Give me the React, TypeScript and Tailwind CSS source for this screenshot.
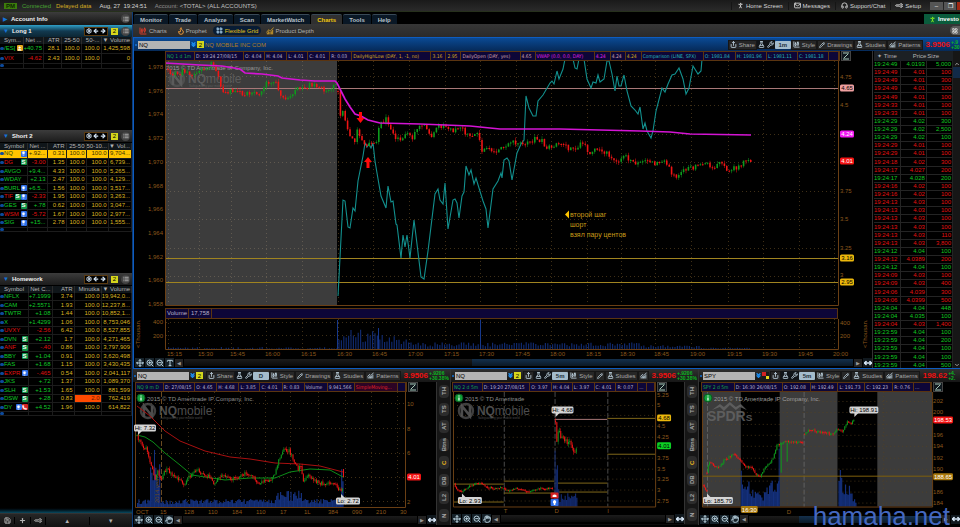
import type { ReactNode } from "react";
import clsx from "clsx";
import {
  Settings,
  ArrowLeft,
  ArrowRight,
  List,
  Wrench,
  Pencil,
  ZoomIn,
  ZoomOut,
  Mail,
  Headphones,
  Lightbulb,
  Phone,
  Hand,
  Type,
  Plus,
  Move,
  MoveHorizontal,
  ChevronsDown,
  ChevronUp,
  ChevronDown,
  LayoutGrid,
  Share,
  FlaskConical,
  ChartCandlestick,
  ChartNoAxesCombined,
  Flame,
  PersonStanding,
  Save,
  User,
} from "lucide-react";

type Point = [number, number];

interface Quote {
  symbol: string;
  badges?: string;
  cells: string[];
  down?: boolean;
  selected?: boolean;
  alert?: boolean;
}

// ── Watchlists ──
const longList: Quote[] = [
  { symbol: "/ES[", badges: "u", cells: ["+40.75", "28.1", "100.0", "100.0", "1,425,598"] },
  { symbol: "VIX", cells: ["-4.62", "2.43", "100.0", "100.0", "0"], down: true },
];

const shortList: Quote[] = [
  { symbol: "NQ", badges: "b", cells: ["+.92...", "0.31", "100.0", "100.0", "9,704..."], selected: true },
  { symbol: "DG", badges: "s", cells: ["-3.00", "1.35", "100.0", "100.0", "6,739..."], down: true },
  { symbol: "AVGO", cells: ["+9.4...", "4.33", "100.0", "100.0", "5,265..."] },
  { symbol: "WDAY", cells: ["+2.13", "2.47", "100.0", "100.0", "4,129..."] },
  { symbol: "BURL", badges: "b", cells: ["+6.5...", "1.56", "100.0", "100.0", "3,517..."] },
  { symbol: "TIF", badges: "sb", cells: ["-2.33", "1.95", "100.0", "100.0", "3,263..."], down: true },
  { symbol: "GES", badges: "s", cells: ["+.78", "0.62", "100.0", "100.0", "3,047..."] },
  { symbol: "WSM", badges: "b", cells: ["-5.72", "1.67", "100.0", "100.0", "2,977..."], down: true },
  { symbol: "SIG", badges: "b", cells: ["+15...", "2.78", "100.0", "100.0", "1,555..."] },
];

const homeworkList: Quote[] = [
  { symbol: "NFLX", cells: ["+7.1999", "3.74", "100.0", "19,942,0..."] },
  { symbol: "CAM", cells: ["+2.5571", "1.93", "100.0", "12,237,8..."] },
  { symbol: "TWTR", cells: ["+1.08", "1.44", "100.0", "10,852,1..."] },
  { symbol: "X", cells: ["+1.4299", "1.06", "100.0", "8,753,046"] },
  { symbol: "UVXY", cells: ["-2.56", "6.42", "100.0", "8,527,855"], down: true },
  { symbol: "DVN", badges: "s", cells: ["+2.12", "1.7", "100.0", "4,271,465"] },
  { symbol: "ANF", badges: "s", cells: ["-.40", "0.86", "100.0", "3,797,909"], down: true },
  { symbol: "BBY", badges: "s", cells: ["+1.04", "0.91", "100.0", "3,620,498"] },
  { symbol: "FAS", cells: ["+1.68", "1.15", "100.0", "3,430,435"] },
  { symbol: "EXPR", badges: "b", cells: ["-.465", "0.54", "100.0", "2,041,117"], down: true },
  { symbol: "JKS", cells: ["+.72", "1.37", "100.0", "1,089,370"] },
  { symbol: "SLH", badges: "s", cells: ["+1.53", "1.65", "100.0", "881,599"] },
  { symbol: "DSW", badges: "s", cells: ["+.28", "0.83", "2.0", "762,419"], alert: true },
  { symbol: "DY", badges: "bp", cells: ["+4.52", "1.96", "100.0", "614,822"] },
];

// ── Time & sales: time, price, size, up/down ──
const trades = `24:49 4.0193 5,000 u|24:49 4.01 100 d|24:49 4.01 300 d|24:49 4.01 100 d|24:49 4.01 100 d
24:33 4.01 100 d|24:33 4.01 100 d|24:29 4.02 300 u|24:29 4.02 2,500 u|24:29 4.02 100 u
24:29 4.01 100 d|24:29 4.01 100 d|24:18 4.02 300 d|24:17 4.027 200 d|24:17 4.028 200 u
24:16 4.02 100 d|24:16 4.02 100 d|24:13 4.03 100 d|24:13 4.03 100 d|24:13 4.03 100 d
24:13 4.03 100 d|24:13 4.03 110 d|24:13 4.03 3,800 d|24:12 4.04 100 u|24:12 4.0389 200 d
24:12 4.04 100 u|24:09 4.03 100 d|24:09 4.03 400 d|24:06 4.039 300 d|24:06 4.0399 500 d
24:04 4.04 448 u|24:04 4.035 100 u|24:04 4.03 1,400 d|23:59 4.04 100 u|23:59 4.04 200 u
23:59 4.04 100 u|23:59 4.04 100 u|23:59 4.04 500 u`
  .split(/[|\n]/)
  .map((t) => t.split(" "));

// ── Chart data ──
const preMarket: Point[] = [[168, 68], [172, 74], [178, 73], [183, 70], [190, 72], [197, 71], [205, 70], [212, 63], [216, 70], [222, 88], [228, 92], [235, 88], [242, 94], [250, 92], [260, 92], [266, 83], [272, 82], [276, 80], [281, 98], [287, 96], [293, 92], [298, 85], [305, 88], [310, 83], [320, 87], [330, 91], [335, 84], [337, 86]];
const session: Point[] = [[338, 90], [341, 122], [343, 107], [346, 125], [350, 135], [354, 143], [357, 130], [361, 137], [366, 144], [372, 140], [377, 142], [379, 125], [386, 118], [391, 127], [395, 140], [402, 137], [408, 130], [413, 137], [420, 123], [426, 126], [431, 138], [437, 127], [447, 124], [453, 132], [457, 125], [463, 128], [468, 135], [479, 134], [481, 150], [487, 145], [493, 151], [500, 148], [510, 141], [520, 143], [531, 140], [537, 137], [542, 140], [546, 148], [555, 143], [562, 142], [568, 148], [576, 146], [585, 142], [589, 153], [598, 146], [604, 150], [613, 158], [620, 159], [627, 156], [635, 163], [640, 161], [648, 160], [655, 162], [662, 160], [668, 165], [673, 176], [680, 174], [685, 168], [695, 166], [705, 160], [710, 167], [720, 163], [728, 168], [738, 167], [745, 158], [748, 157], [751, 160]];
const vwap = "165,62 200,64 222,65 240,68 245,72 262,73 278,75 282,77 300,79 315,80 335,80 337,82 341,90 345,98 350,106 355,113 361,115 368,119 380,122 420,123 470,125 480,126 500,128 560,128 640,130 670,131 690,133 751,134";
const spx = "338,295 343,199 345,200 348,226 350,227 353,207 355,210 358,180 363,155 365,142 367,146 369,143 371,147 373,142 375,160 377,172 381,195 386,207 388,185 391,201 393,200 396,223 397,224 401,257 403,234 405,246 407,234 410,257 414,219 417,243 421,276 424,278 428,250 435,193 438,188 440,199 443,203 445,182 448,228 453,199 455,198 457,202 459,217 462,195 464,191 466,165 469,174 471,169 474,183 476,177 479,187 483,200 486,208 488,227 493,188 498,180 501,172 502,177 504,159 507,157 509,160 512,179 517,152 521,143 524,139 526,95 529,107 533,115 536,115 538,100 543,94 550,82 552,80 554,83 557,70 559,78 563,68 565,58 573,58 575,67 577,68 579,58 584,58 587,78 591,87 593,81 596,82 598,74 600,81 604,78 607,60 609,60 612,73 615,90 617,75 619,85 621,85 624,74 627,90 631,105 635,109 638,113 640,106 643,128 645,122 647,130 651,137 653,130 656,110 662,87 665,91 668,83 672,74 675,73 679,67 683,78 686,93 689,87 693,65 698,73 701,70 702,58";
const daily: Point[] = [[137, 435], [140, 441], [143, 446], [147, 448], [150, 460], [153, 470], [155, 478], [158, 470], [161, 480], [164, 472], [167, 468], [172, 475], [178, 478], [184, 483], [188, 478], [192, 472], [196, 468], [202, 473], [208, 474], [214, 482], [219, 477], [225, 474], [232, 478], [238, 475], [244, 473], [252, 473], [258, 482], [265, 479], [270, 480], [274, 475], [277, 465], [280, 456], [284, 448], [289, 450], [293, 458], [298, 468], [301, 464], [303, 480], [307, 474], [312, 477], [319, 482], [327, 482], [335, 481], [339, 490], [343, 487]];
const twoDayFlat: Point[] = [[453, 483], [455, 488], [461, 491], [465, 488], [470, 485], [479, 482], [487, 487], [495, 488], [503, 487], [506, 490], [515, 488], [530, 491], [540, 488], [553, 488]];
const twoDayDrop: Point[] = [[555, 420], [556, 440], [558, 432], [561, 436], [565, 440], [570, 441], [573, 450], [577, 447]];
const spyParts: Point[][] = [
  [[702, 484], [704, 488], [706, 492]],
  [[706, 472], [708, 460], [712, 465], [718, 466], [725, 458], [733, 453], [740, 460], [745, 466], [750, 466], [755, 474], [759, 476], [765, 467], [772, 458], [776, 445], [780, 442], [790, 441], [803, 442]],
  [[804, 433], [810, 428], [817, 431], [825, 431], [831, 434], [837, 428], [842, 430], [847, 421], [850, 423], [854, 418]],
];

const mainTimes = ["15:15", "15:30", "15:45", "16:00", "16:15", "16:30", "16:45", "17:00", "17:15", "17:30", "17:45", "18:00", "18:15", "18:30", "18:45", "19:00", "19:15", "19:30", "19:45", "20:00"];
const mainXs = [168, 199, 231, 266, 302, 338, 373, 409, 445, 480, 516, 551, 587, 621, 655, 691, 728, 763, 799, 834];

const noise = (n: number) => {
  const v = Math.sin(n * 127.1 + 11.7) * 43758.5453;
  return v - Math.floor(v);
};

const valueAt = (points: Point[], x: number) => {
  const i = points.findIndex((p) => p[0] >= x);
  if (i <= 0) return points[i === 0 ? 0 : points.length - 1][1];
  const [x0, y0] = points[i - 1];
  const [x1, y1] = points[i];
  return y0 + ((y1 - y0) * (x - x0)) / (x1 - x0);
};

function Candles({ points, step = 2.4, swing = 4, width = 1.6 }: { points: Point[]; step?: number; swing?: number; width?: number }) {
  let up = "";
  let down = "";
  let prev = points[0][1];
  const last = points[points.length - 1][0];
  for (let x = points[0][0]; x <= last; x += step) {
    const close = valueAt(points, x) + (noise(x) - 0.5) * swing;
    const top = Math.min(prev, close);
    const bottom = Math.max(prev, close, top + 1);
    const high = top - noise(x + 3) * swing * 0.6;
    const low = bottom + noise(x + 7) * swing * 0.6;
    const d = `M${x - width / 2} ${top}h${width}V${bottom}h${-width}zM${x - 0.25} ${high}h.5V${low}h-.5z`;
    if (close < prev - swing * 0.08) up += d;
    else down += d;
    prev = close;
  }
  return (
    <g>
      <path d={up} fill="#0d9a1c" />
      <path d={down} fill="#f01414" />
    </g>
  );
}

function Bars({ from, to, base, step = 2.4, height, color = "#10296c" }: { from: number; to: number; base: number; step?: number; height: (x: number) => number; color?: string }) {
  let d = "";
  for (let x = from; x <= to; x += step) {
    const h = height(x) * (0.45 + noise(x) * 0.9);
    d += `M${x} ${base}v${-h}h1.2v${h}z`;
  }
  return <path d={d} fill={color} />;
}

function Grid({ xs, ys, left, right, top, bottom }: { xs: number[]; ys: number[]; left: number; right: number; top: number; bottom: number }) {
  return (
    <g stroke="#5a4420" strokeWidth="1" strokeDasharray="1 3" opacity="0.7">
      {xs.map((x) => <path key={x} d={`M${x + 0.5} ${top}V${bottom}`} />)}
      {ys.map((y) => <path key={y} d={`M${left} ${y + 0.5}H${right}`} />)}
    </g>
  );
}

function Tag({ x, y, text, fill, color = "#000", w = 14 }: { x: number; y: number; text: string; fill: string; color?: string; w?: number }) {
  return (
    <g>
      <rect x={x} y={y - 3.5} width={w} height="7" rx="1.5" fill={fill} />
      <text x={x + w / 2} y={y + 2} textAnchor="middle" fill={color}>{text}</text>
    </g>
  );
}

function NqLogo({ x, y }: { x: number; y: number }) {
  return (
    <g fill="#666" opacity="0.75">
      <circle cx={x} cy={y} r="7" fill="none" stroke="#555" strokeWidth="2.5" />
      <path d={`M${x - 4} ${y + 6}V${y - 5}L${x + 4} ${y + 5}V${y - 5}`} stroke="#666" strokeWidth="2.5" fill="none" />
      <text x={x + 11} y={y + 4} fontSize="12" fontWeight="bold">
        NQ<tspan fontWeight="normal">mobile</tspan>
      </text>
      <text x={x + 12} y={y + 8} fontSize="3">Safeguarding your mobile world</text>
    </g>
  );
}

function InfoDot({ x, y }: { x: number; y: number }) {
  return (
    <g>
      <circle cx={x} cy={y} r="4" fill="#12a03a" stroke="#0a5a20" />
      <path d={`M${x} ${y - 2.5}v1M${x} ${y - 0.5}v3`} stroke="#fff" strokeWidth="1.2" />
    </g>
  );
}

function Badge({ kind }: { kind: string }) {
  if (kind === "s")
    return <span className="flex size-[6px] items-center justify-center rounded-[1px] bg-[#12964a] font-bold text-white">S</span>;
  return (
    <span className={clsx("flex size-[6px] items-center justify-center rounded-[1px]", kind === "b" && "bg-[#2f6fe8]", kind === "p" && "bg-[#d42222]", kind === "u" && "bg-[#e8a81c]")}>
      {kind === "b" && <Lightbulb className="size-[5px] fill-white text-white" />}
      {kind === "p" && <Phone className="size-[5px] fill-white text-white" />}
      {kind === "u" && <User className="size-[5px] fill-white text-white" />}
    </span>
  );
}

function Dot() {
  return <span className="block h-[3px] w-[4px] rounded-full bg-[#0d4a9c]" />;
}

function WatchHeader({ title, active }: { title: string; active?: boolean }) {
  return (
    <div className={clsx("flex h-[12px] items-center gap-[3px] bg-linear-to-b pl-[3px] pr-[2px]", active ? "from-[#2fa0c8] via-[#123a50] to-[#0c2634]" : "from-[#3c3c3c] to-[#1c1c1c]")}>
      <span className="text-[#1673d8]">▼</span>
      <h2 className="flex-1 font-bold text-[#f0f0f0]">{title}</h2>
      <div className="flex h-[9px] items-center gap-[1px] border border-[#5a3a10] bg-black px-[1px] text-[#d4e4f4]">
        <button aria-label="Settings"><Settings className="size-[6px]" strokeWidth={4} /></button>
        <button aria-label="Previous"><ArrowLeft className="size-[6px]" strokeWidth={5} /></button>
        <button aria-label="Next"><ArrowRight className="size-[6px]" strokeWidth={5} /></button>
      </div>
      <span className="flex size-[7px] items-center justify-center bg-[#d6d61c] text-black">2</span>
      <button aria-label="Menu" className="flex size-[9px] items-center justify-center rounded-full bg-[#444] text-[#ccc]">
        <List className="size-[6px]" strokeWidth={3} />
      </button>
    </div>
  );
}

function WatchTable({ columns, rows, colClasses, className }: { columns: string[]; rows: Quote[]; colClasses: string[]; className: string }) {
  return (
    <table className={clsx("w-full table-fixed border-collapse leading-[7px]", className)}>
      <colgroup>
        <col className="w-[4px]" />
        {colClasses.map((c, i) => <col key={i} className={c} />)}
      </colgroup>
      <thead>
        <tr className="bg-[#10161a] text-[#b4b4b4]">
          <th className="p-0" />
          {columns.map((c, i) => (
            <th key={i} className={clsx("overflow-hidden border-r border-[#2a2a2a] p-0 pr-[1px] font-normal whitespace-nowrap", i === 0 ? "text-left" : "text-right")}>
              {c}
            </th>
          ))}
        </tr>
      </thead>
      <tbody>
        {rows.map((r) => (
          <tr key={r.symbol} className={clsx("border-b border-[#1c1c1c]", r.selected && "bg-[#ffc400]")}>
            <td className="p-0"><Dot /></td>
            <td className={clsx("border-r border-[#1c1c1c] p-0", r.selected ? "text-[#2a4a00]" : r.down ? "text-[#e01010]" : "text-[#10c828]")}>
              <div className="flex h-[7px] items-center justify-between">
                <span>{r.symbol}</span>
                <span className="flex shrink-0">{r.badges?.split("").map((b) => <Badge key={b} kind={b} />)}</span>
              </div>
            </td>
            {r.cells.map((c, i) => (
              <td
                key={i}
                className={clsx(
                  "overflow-hidden border-r border-[#1c1c1c] p-0 pr-[1px] text-right whitespace-nowrap",
                  r.selected ? "text-[#3a3000]" : r.alert && i === 2 ? "bg-[#ff4a00] text-[#6a1800]" : i > 0 ? "text-[#dcb420]" : r.down ? "text-[#e01010]" : "text-[#10c828]",
                )}
              >
                {c}
              </td>
            ))}
          </tr>
        ))}
        <tr className="border-b border-[#1c1c1c]">
          <td className="p-0"><Dot /></td>
          {columns.map((_, i) => <td key={i} className="border-r border-[#1c1c1c] p-0" />)}
        </tr>
      </tbody>
    </table>
  );
}

function ToolButton({ icon, label, name }: { icon: ReactNode; label: string; name?: string }) {
  return (
    <button aria-label={name} className="flex h-[10px] shrink-0 items-center gap-[2px] border border-[#161616] bg-[#262626] px-[1px] text-[#a8a8a8]">
      <span className="text-[#b8ccd8]">{icon}</span>
      {label}
    </button>
  );
}

interface ToolbarProps {
  symbol: string;
  company?: string;
  interval: string;
  price: string;
  change: [string, string];
  changeWidth?: string;
  compact?: boolean;
  patternsLabel?: boolean;
  linkColor?: boolean;
}

function ChartToolbar({ symbol, company, interval, price, change, changeWidth = "w-[22px]", compact, patternsLabel = true, linkColor }: ToolbarProps) {
  return (
    <div className={clsx("flex h-[13px] items-center overflow-hidden whitespace-nowrap", company ? "bg-linear-to-b from-[#0a4a94] to-[#062a58]" : "bg-linear-to-b from-[#303030] to-[#161616]")}>
      <span className="mx-[1px] block size-[2px] shrink-0 rounded-full bg-[#1673d8]" />
      <input aria-label="Symbol" defaultValue={symbol} className="h-[8px] w-[52px] shrink-0 bg-[#b4b4b4] px-[1px] text-black" />
      <button aria-label="Symbol list" className="shrink-0 text-[#1c8cf0]"><ChevronsDown className="size-[7px]" strokeWidth={5} /></button>
      {linkColor ? (
        <span className="grid size-[7px] shrink-0 grid-cols-2">
          <span className="bg-[#d42222]" />
          <span className="bg-[#1a1a1a]" />
          <span className="bg-[#1a1a1a]" />
          <span className="bg-[#e8d81c]" />
        </span>
      ) : (
        <span className="flex size-[7px] shrink-0 items-center justify-center bg-[#d6d61c] text-black">2</span>
      )}
      <span className="flex-1 pl-[1px] text-[#b07c24]">{company}</span>
      <ToolButton icon={<Share className="size-[7px]" strokeWidth={3} />} label={compact ? "" : "Share"} name="Share" />
      <button aria-label="Studies shortcut" className="flex size-[9px] shrink-0 items-center justify-center bg-[#101418] text-[#b8ccd8]"><FlaskConical className="size-[7px]" strokeWidth={3} /></button>
      <button aria-label="Chart settings" className="flex size-[9px] shrink-0 items-center justify-center bg-[#101418] text-[#b8ccd8]"><Wrench className="size-[7px]" strokeWidth={3} /></button>
      <button className="flex h-[8px] w-[16px] shrink-0 items-center justify-center rounded-[1px] bg-[#a4bccc] font-bold text-[#22303a]">{interval}</button>
      <ToolButton icon={<ChartCandlestick className="size-[7px]" strokeWidth={3} />} label="Style" />
      <ToolButton icon={<Pencil className="size-[6px]" strokeWidth={3} />} label={compact ? "" : "Drawings"} name="Drawings" />
      <ToolButton icon={<FlaskConical className="size-[7px]" strokeWidth={3} />} label="Studies" />
      <ToolButton icon={<ChartNoAxesCombined className="size-[7px]" strokeWidth={3} />} label={patternsLabel ? "Patterns" : ""} name="Patterns" />
      <span className="pl-[3px] text-[8px] font-bold text-[#f01010]">{price}</span>
      <span className={clsx("shrink-0 overflow-hidden pl-[1px] text-[5px] leading-[5px] font-bold text-[#0cb820]", changeWidth)}>
        {change[0]}
        <br />
        {change[1]}
      </span>
    </div>
  );
}

function Strip({ cells, className }: { cells: [string, string][]; className: string }) {
  return (
    <div className={clsx("grid h-[10px] items-stretch border border-[#5a3410] bg-[#0d0638] font-['DejaVu_Sans_Condensed','Liberation_Sans',sans-serif] text-[5px]", className)}>
      {cells.map(([text, color], i) => (
        <span key={i} className={clsx("border-r border-[#5a3410] pl-[1px] whitespace-nowrap", color)}>{text}</span>
      ))}
    </div>
  );
}

function ScrollBar({ thumb, hand }: { thumb?: string; hand?: boolean }) {
  const icons = [<Move key="m" />, <ZoomIn key="i" />, <ZoomOut key="o" />, hand ? <Hand key="h" /> : <Type key="t" />];
  const labels = ["Pan", "Zoom in", "Zoom out", hand ? "Grab" : "Text"];
  return (
    <div className="flex h-[11px] items-center gap-[1px] bg-black pl-[1px]">
      {icons.map((icon, i) => (
        <button key={i} aria-label={labels[i]} className="flex size-[9px] items-center justify-center bg-[#16222a] text-[#b8d0dc] [&>svg]:size-[8px] [&>svg]:stroke-3">{icon}</button>
      ))}
      <button aria-label="Scroll left" className="flex size-[8px] items-center justify-center bg-[#222] text-[5px] text-[#999]">◀</button>
      <div className="flex h-[7px] flex-1 bg-linear-to-b from-[#1c1c1c] to-[#0a0a0a]">
        {thumb && <span className={clsx("ml-auto block h-full bg-linear-to-b from-[#14304c] to-[#0a1826]", thumb)} />}
      </div>
      <button aria-label="Scroll right" className="flex size-[8px] items-center justify-center bg-[#222] text-[5px] text-[#999]">▶</button>
      <button aria-label="Fit width" className="flex size-[9px] items-center justify-center bg-[#10181e] text-[#d4e4f4]"><MoveHorizontal className="size-[8px]" strokeWidth={5} /></button>
    </div>
  );
}

function SideTabs() {
  const tabs = ["TH", "TS", "AT", "Btns", "C", "DB", "L2", "N"];
  return (
    <nav className="flex w-[14px] shrink-0 flex-col items-center justify-around border-l border-[#333] bg-[#161616] py-[1px]">
      {tabs.map((t) => (
        <button key={t} className={clsx("flex min-h-[13px] w-[10px] rotate-180 items-center justify-center rounded-[4px] bg-[#2c2c2c] px-0 py-[1px] font-bold [writing-mode:vertical-rl]", t === "C" ? "text-[#e8b81c]" : "text-[#a8a8a8]")}>
          {t}
        </button>
      ))}
    </nav>
  );
}

function MainChart() {
  const ys = [75, 104, 133, 161, 190, 218, 247, 275];
  return (
    <svg viewBox="134 60 738 247" className="block w-full text-[6px]" role="img" aria-label="NQ one minute chart">
      <rect x="166" y="60" width="171" height="244" fill="#3c3c3c" />
      <Grid xs={mainXs} ys={ys} left={166} right={838} top={60} bottom={304} />
      <g stroke="#6a6a6a" strokeDasharray="1 3" opacity="0.6">
        {mainXs.slice(0, 5).map((x) => <path key={x} d={`M${x + 0.5} 60V304`} />)}
        {ys.map((y) => <path key={y} d={`M166 ${y + 0.5}H337`} />)}
      </g>
      <text x="166" y="69" fill="#999">2015 © TD Ameritrade IP Company, Inc.</text>
      <NqLogo x={177} y={78} />
      <path d="M166 87.5H838" stroke="#a87878" />
      <path d="M166 257.5H838M166 281.5H838" stroke="#a08420" />
      <Candles points={preMarket} swing={5} />
      <polyline points={spx} fill="none" stroke="#12908e" strokeWidth="1.1" />
      <Candles points={session} swing={5} />
      <polyline points={vwap} fill="none" stroke="#d414d4" strokeWidth="1.7" />
      <path d="M359 111h3v6h2.5l-4 5-4-5h2.5z" fill="#ff0a0a" />
      <path d="M366.500 167h3v-6h2.5l-4-5-4 5h2.5z" fill="#ff0a0a" />
      <path d="M165.500 60V304.500H838.500V60" fill="none" stroke="#6a3f14" />
      <path d="M565 213.500l4-4v8z" fill="#ffc400" />
      <g fill="#c89c18" fontSize="7">
        <text x="570" y="216">второй шаг</text>
        <text x="570" y="226">шорт</text>
        <text x="570" y="236">взял пару центов</text>
      </g>
      <g fill="#8c581c" textAnchor="end">
        {["1,978", "1,976", "1,974", "1,972", "1,970", "1,968", "1,966", "1,964", "1,962", "1,960", "1,958"].map((t, i) => (
          <text key={t} x="163" y={68 + i * 23.7}>{t}</text>
        ))}
      </g>
      <g fill="#8c581c">
        <text x="840" y="78">4.75</text>
        <text x="840" y="106">4.5</text>
        <text x="840" y="192">3.75</text>
        <text x="840" y="220">3.5</text>
        <text x="840" y="249">3.25</text>
        <text x="840" y="276">3</text>
      </g>
      <Tag x={840} y={87} text="4.65" fill="#f0a0a0" />
      <Tag x={840} y={133} text="4.24" fill="#f418f4" color="#fff" />
      <Tag x={840} y={160} text="4.01" fill="#f41414" color="#fff" />
      <Tag x={840} y={257} text="3.16" fill="#ecb80c" />
      <Tag x={840} y={281} text="2.95" fill="#ecb80c" />
    </svg>
  );
}

function VolumeChart() {
  const height = (x: number) => (x < 337 ? noise(x * 3) * 2 : x < 410 ? 17 - (x - 338) / 9 : x < 640 ? 5 : x < 700 ? 3 : 1);
  return (
    <svg viewBox="134 318 738 38" className="block w-full text-[6px]" role="img" aria-label="Volume">
      <Grid xs={mainXs} ys={[321, 334]} left={166} right={838} top={318} bottom={348} />
      <Bars from={168} to={750} base={348} height={height} />
      <path d="M337.500 348V319M378.500 348V327M480.500 348V319" stroke="#16388c" />
      <path d="M165.500 318V348.500H838.500V318" fill="none" stroke="#6a3f14" />
      <g fill="#8c581c">
        <text x="163" y="323" textAnchor="end">400</text>
        <text x="163" y="337" textAnchor="end">200</text>
        <text x="840" y="324">400</text>
        <text x="840" y="337">200</text>
        <text x="140" y="347" transform="rotate(-90 140 347)">&lt;Thousan...</text>
        <text x="867" y="347" transform="rotate(-90 867 347)">&lt;Thousan...</text>
        {mainTimes.map((t, i) => <text key={t} x={mainXs[i] - 1} y="355">{t}</text>)}
      </g>
    </svg>
  );
}

function DailyChart() {
  return (
    <svg viewBox="133 391 303 122" className="block w-full text-[6px]" role="img" aria-label="NQ daily chart">
      <Grid xs={[188, 214, 240, 265, 290, 318, 345, 371, 397]} ys={[402, 427, 452, 476, 500]} left={135} right={405} top={391} bottom={506} />
      <path d="M161.500 391V506" stroke="#6a4a20" strokeDasharray="5 2" />
      <NqLogo x={148} y={410} />
      <InfoDot x={141} y={397} />
      <text x="147" y="400" fill="#8c8c8c">2015 © TD Ameritrade IP Company, Inc.</text>
      <Bars from={137} to={343} base={506} step={1.3} color="#14307c" height={(x) => (x > 150 && x < 160 ? 34 : x > 275 && x < 302 ? 13 : x > 340 ? 30 : 6)} />
      <path d="M154.500 506V449" stroke="#14307c" />
      <polyline points="137,405 150,415 165,430 180,440 205,450 230,456 250,458 275,462 300,463 320,465 343,471" fill="none" stroke="#a81010" />
      <polyline points="137,434 145,436 153,441 165,452 180,464 192,474 205,476 225,479 250,477 275,477 290,471 310,468 330,469 343,476" fill="none" stroke="#0c8c18" />
      <Candles points={daily} step={1.3} swing={4} width={1.1} />
      <path d="M343.500 468V476" stroke="#f01414" />
      <path d="M135.500 391V506.500H405.500V391" fill="none" stroke="#6a3f14" />
      <text x="159" y="502" fill="#6a4a20" transform="rotate(-90 159 502)">2014 year</text>
      <Tag x={134} y={427} text="Hi: 7.32" fill="#d4d4d4" w={22} />
      <path d="M138 434l0-4 4 0z" fill="#d4d4d4" />
      <Tag x={336} y={500} text="Lo: 2.72" fill="#d4d4d4" w={24} />
      <path d="M341 493l0 4 4 0z" fill="#d4d4d4" />
      <g fill="#8c581c">
        {["10", "8", "6", "4", "2"].map((t, i) => i !== 3 && <text key={t} x="407" y={405 + i * 24.5}>{t}</text>)}
        {["OCT", "15", "128", "110", "184", "110", "17", "1L", "384", "090", "210", "30"].map((t, i) => (
          <text key={i} x={136 + i * 24} y="513">{t}</text>
        ))}
      </g>
      <Tag x={407} y={476} text="4.01" fill="#f41414" color="#fff" />
    </svg>
  );
}

function TwoDayChart() {
  const labels: [string, number][] = [["5.25", 396], ["5", 406], ["4.5", 427], ["4.25", 438], ["3.75", 459], ["3.5", 470], ["3.25", 480], ["3", 491], ["2.75", 502]];
  return (
    <svg viewBox="450 391 234 122" className="block w-full text-[6px]" role="img" aria-label="NQ five minute chart">
      <Grid xs={[]} ys={[404, 414, 425, 436, 446, 457, 468, 478, 489, 500]} left={452} right={655} top={391} bottom={506} />
      <path d="M503.500 391V506M554.500 391V506M607.500 391V506" stroke="#4a4a4a" strokeDasharray="5 2" />
      <InfoDot x={458} y={397} />
      <text x="464" y="400" fill="#8c8c8c">2015 © TD Ameritrade</text>
      <NqLogo x={465} y={410} />
      <path d="M453 483.500H503M453 501.500H503M503 480.500H554M503 492.500H554M554 482.500H607M554 491.500H607M607 417.500H655M607 453.500H655" stroke="#80681a" />
      <path d="M554 418.500H607" stroke="#a87878" />
      <Bars from={555} to={577} base={506} step={1.3} color="#12296c" height={(x) => (x < 558 ? 34 : 10)} />
      <path d="M554.500 506V450" stroke="#12296c" />
      <Candles points={twoDayFlat} step={1.3} swing={2} width={1.1} />
      <Candles points={twoDayDrop} step={1.3} swing={6} width={1.1} />
      <path d="M452.500 391V506.500H655.500V391" fill="none" stroke="#6a3f14" />
      <rect x="550" y="492" width="8" height="6" rx="1" fill="#d42222" />
      <path d="M552 496.500v-1.500q2-2 4 0v1.500z" fill="#fff" />
      <rect x="550" y="498.500" width="8" height="7" rx="1" fill="#2f6fe8" />
      <path d="M554 499.500a2 2 0 0 1 .8 3.600v1.500h-1.600v-1.500a2 2 0 0 1 .8-3.600z" fill="#fff" />
      <Tag x={551} y={409} text="Hi: 4.68" fill="#d4d4d4" w={22} />
      <path d="M555 416l0-4 4 0z" fill="#d4d4d4" />
      <Tag x={457} y={500} text="Lo: 2.93" fill="#d4d4d4" w={24} />
      <path d="M461 493l0 4 4 0z" fill="#d4d4d4" />
      <g fill="#8c581c">
        {labels.map(([t, y]) => <text key={t} x="657" y={y}>{t}</text>)}
        <text x="503" y="513">T</text>
        <text x="554" y="513">D</text>
        <text x="607" y="513">I</text>
      </g>
      <Tag x={657} y={417} text="4.68" fill="#ecb80c" />
      <Tag x={657} y={445} text="4.01" fill="#0cd024" />
    </svg>
  );
}

function SpyChart() {
  const labels: [string, number][] = [["202", 402], ["200", 413], ["196", 436], ["194", 447], ["192", 459], ["190", 470], ["186", 493], ["184", 504]];
  return (
    <svg viewBox="698 391 262 122" className="block w-full text-[6px]" role="img" aria-label="SPY five minute chart">
      <path d="M702 391h38v115h-38zM779 391h58v115h-58zM877 391h55v115h-55z" fill="#3c3c3c" />
      <Grid xs={[786, 883]} ys={[400, 411, 423, 434, 445, 457, 468, 480, 491, 502]} left={702} right={932} top={391} bottom={506} />
      <path d="M706.500 391V506M803.500 391V506" stroke="#606060" strokeDasharray="5 2" />
      <InfoDot x={707} y={397} />
      <text x="713" y="400" fill="#9c9c9c">2015 © TD Ameritrade IP Company, Inc.</text>
      <g fill="#666" opacity="0.8">
        <path d="M711 409l8-6 4 3 6-5 6 5 5-3 6 6-7-3-4 3-6-5-6 6-4-4z" />
        <text x="706" y="420" fontSize="14" fontWeight="bold">SPDR<tspan fontSize="10">S</tspan></text>
      </g>
      <Bars from={741} to={778} base={506} step={1.3} color="#14307c" height={(x) => 9 + Math.abs(x - 759) * 0.9} />
      <Bars from={838} to={855} base={506} step={1.3} color="#14307c" height={(x) => 30 - (x - 838) * 1.3} />
      <path d="M740.500 506V470M778.500 506V448" stroke="#14307c" />
      <path d="M702 475.500H932" stroke="#80600c" />
      <path d="M780.500 442V472M786.500 442V461" stroke="#0d9a1c" />
      {spyParts.map((points, i) => <Candles key={i} points={points} step={1.3} swing={2.5} width={1.1} />)}
      <path d="M701.500 391V506.500H932.500V391" fill="none" stroke="#6a3f14" />
      <Tag x={849} y={409} text="Hi: 198.91" fill="#d4d4d4" w={29} />
      <path d="M854 416l0-4 4 0z" fill="#d4d4d4" />
      <Tag x={702} y={500} text="Lo: 185.79" fill="#d4d4d4" w={30} />
      <path d="M706 493l0 4 4 0z" fill="#d4d4d4" />
      <g fill="#8c581c">
        {labels.map(([t, y]) => <text key={t} x="933" y={y}>{t}</text>)}
        <text x="786" y="513">D</text>
      </g>
      <Tag x={933} y={419} text="198.53" fill="#f41414" color="#fff" w={20} />
      <Tag x={933} y={476} text="188.65" fill="#a8780c" color="#fff" w={20} />
      <Tag x={740} y={509} text="16:30" fill="#a8780c" color="#fff" w={17} />
    </svg>
  );
}

const gold = "text-[#d4a820]";
const pale = "text-[#b8b2d0]";
const green = "text-[#14a84a]";
const teal = "text-[#24b8b8]";
const rose = "text-[#d0a0ac]";
const violet = "text-[#e020e8]";

function AxisButton() {
  return (
    <button aria-label="Axis settings" className="ml-[1px] flex size-[10px] shrink-0 items-center justify-center border border-[#444] bg-[#10181e] text-[#a8c8b8]">
      <svg viewBox="0 0 8 8" className="size-[8px]" fill="none" stroke="currentColor">
        <path d="M1 7h6M1 1h6M2 6l4-4" />
      </svg>
    </button>
  );
}

export default function App() {
  return (
    <div className="relative flex min-h-screen flex-col overflow-hidden bg-black font-['Liberation_Sans',sans-serif] text-[6px] leading-[8px]">
      {/* Status bar */}
      <header className="flex h-[12px] items-center justify-between border-b border-[#26301c] bg-linear-to-b from-[#1a1a1a] to-[#2a2a2a]">
        <div className="flex items-center gap-[5px] pl-[4px]">
          <span className="bg-[#3c7c0c] px-[2px] leading-[6px] font-bold text-[#0c2400]">PM</span>
          <span className="text-[#46a030]">Connected</span>
          <span className={gold}>Delayed data</span>
          <span className="pl-[3px] text-[#d4d4d4]">Aug, 27&nbsp; 19:24:51</span>
          <span className="pl-[3px] text-[#8c8c8c]">Account: <span className="text-[#c0c0c0]">&lt;TOTAL&gt; (ALL ACCOUNTS)</span></span>
        </div>
        <div className="flex items-center text-[#d4d4d4]">
          {[
            [<PersonStanding key="p" />, "Home Screen"],
            [<Mail key="m" />, "Messages"],
            [<Headphones key="h" />, "Support/Chat"],
            [<Wrench key="w" className="rotate-45" />, "Setup"],
          ].map(([icon, label], i) => (
            <button key={i} className="flex items-center gap-[2px] border-l border-[#151515] px-[5px] [&>svg]:size-[7px] [&>svg]:stroke-3">
              {icon}
              {label}
            </button>
          ))}
          <button aria-label="Minimise" className="ml-[4px] flex h-[8px] w-[13px] items-center justify-center bg-[#555] text-white">–</button>
          <button aria-label="Restore" className="ml-[1px] flex h-[8px] w-[12px] items-center justify-center bg-[#555] text-white">❐</button>
          <button aria-label="Close" className="ml-[1px] h-[8px] w-[3px] bg-[#a02814]" />
        </div>
      </header>

      <div className="flex flex-1">
        {/* Watchlists */}
        <aside className="flex w-[133px] shrink-0 flex-col border-r border-[#0d3c78]">
          <div className="flex h-[13px] items-center justify-between bg-linear-to-b from-[#3c3c3c] to-[#161616] pl-[3px] pr-[2px]">
            <div className="flex items-center gap-[3px]">
              <span className="text-[#1673d8]">▶</span>
              <h2 className="font-bold text-[#f0f0f0]">Account Info</h2>
            </div>
            <button aria-label="Menu" className="flex size-[9px] items-center justify-center rounded-full bg-[#444] text-[#ccc]">
              <List className="size-[6px]" strokeWidth={3} />
            </button>
          </div>
          <section className="min-h-[105px]">
            <WatchHeader title="Long 1" active />
            <WatchTable className="h-[32px]" columns={["Sym...", "Net ...", "ATR", "25-50", "50-...", "▼ Volume"]} rows={longList} colClasses={["w-[19px]", "w-[20px]", "w-[18px]", "w-[20px]", "w-[20px]", ""]} />
          </section>
          <section className="min-h-[143px]">
            <WatchHeader title="Short 2" />
            <WatchTable className="mt-[1px] h-[89px]" columns={["Symbol", "Net ...", "ATR", "25-50", "50-10...", "▼ Vol..."]} rows={shortList} colClasses={["w-[23px]", "w-[20px]", "w-[19px]", "w-[20px]", "w-[22px]", ""]} />
          </section>
          <section className="flex-1">
            <WatchHeader title="Homework" />
            <WatchTable className="mt-[1px] h-[130px]" columns={["Symbol", "Net C...", "ATR", "Minutka", "▼ Volume"]} rows={homeworkList} colClasses={["w-[24px]", "w-[24px]", "w-[22px]", "w-[27px]", ""]} />
          </section>
          <div className="h-[6px] bg-linear-to-b from-black to-[#0a4a60]" />
          <div className="flex h-[14px] items-center border-t border-[#333] bg-linear-to-b from-[#262626] to-[#121212] text-[#b4b4b4]">
            <button aria-label="Save" className="flex w-[14px] justify-center"><Save className="size-[7px]" strokeWidth={3} /></button>
            <button aria-label="Add" className="flex w-[16px] justify-center border-l border-black"><Plus className="size-[7px]" strokeWidth={4} /></button>
            <button aria-label="Configure" className="flex w-[15px] justify-center border-l border-black"><Wrench className="size-[7px] rotate-45" strokeWidth={3} /></button>
            <button className="flex-1 border-l border-black">▲</button>
            <button className="flex-1 border-l border-black">▼</button>
          </div>
        </aside>

        <main className="flex min-w-0 flex-1 flex-col">
          {/* Tabs */}
          <nav className="flex h-[12px] items-end justify-between pl-[1px] font-bold">
            <div className="flex">
              {["Monitor", "Trade", "Analyze", "Scan", "MarketWatch", "Charts", "Tools", "Help"].map((t) => (
                <a
                  key={t}
                  href={`#${t}`}
                  className={clsx("mr-[1px] flex h-[10px] items-center rounded-t-[2px] border-t border-[#3a4a58] px-[6px]", t === "Charts" ? "bg-[#303030] text-[#f0c80c]" : "bg-[#0a1826] text-[#b8c0c8]")}
                >
                  {t}
                </a>
              ))}
            </div>
            <a href="#investools" className="flex h-[10px] w-[36px] items-center gap-[2px] overflow-hidden bg-[#0a5c3c] pl-[5px] whitespace-nowrap text-white">
              <PersonStanding className="size-[7px] shrink-0 text-[#8cf01c]" strokeWidth={3} />
              Investo
            </a>
          </nav>
          <div className="flex h-[13px] items-center bg-linear-to-b from-[#363636] to-[#2a2a2a] pl-[5px] text-[#b0b0b0]">
            <button className="flex items-center gap-[2px] px-[1px]"><ChartCandlestick className="size-[8px] text-[#d43c2c]" strokeWidth={3} />Charts</button>
            <button className="ml-[8px] flex items-center gap-[1px] px-[1px]"><Flame className="size-[8px] text-[#e8983c]" strokeWidth={3} />Prophet</button>
            <button className="ml-[5px] flex h-[9px] items-center gap-[2px] rounded-full bg-[#081c34] px-[3px] text-[#e8c41c]"><LayoutGrid className="size-[7px] fill-[#8cb0cc] text-[#8cb0cc]" />Flexible Grid</button>
            <button className="ml-[5px] flex items-center gap-[1px]"><ChartNoAxesCombined className="size-[8px] text-[#c8982c]" strokeWidth={3} />Product Depth</button>
            <button aria-label="Grid layout" className="ml-auto flex h-[9px] w-[10px] items-center justify-center rounded-l-full bg-[#5a5a5a] text-[#ddd]"><LayoutGrid className="size-[6px]" strokeWidth={3} /></button>
          </div>

          {/* Large chart */}
          <section className="border-y border-l border-[#0d5cc0]">
            <ChartToolbar symbol="NQ" company="NQ MOBILE INC COM" interval="1m" price="3.9506" change={["+.9", "+30"]} changeWidth="w-[10px]" />
            <div className="flex">
              <div className="min-w-0 flex-1">
                <div className="flex pr-[21px] pl-[31px]">
                  <Strip
                    className="flex-1 grid-cols-[29fr_49fr_21fr_22fr_21fr_22fr_22fr_79fr_15fr_15fr_59fr_15fr_59fr_16fr_15fr_16fr_62fr_32fr_31fr_31fr_31fr_10fr]"
                    cells={[
                      ["NQ 1 d 1m", green], ["D: 19:24 27/08/15", pale], ["O: 4.04", pale], ["H: 4.04", pale], ["L: 4.01", pale], ["C: 4.01", pale], ["R: 0.03", pale],
                      ["DailyHighLow (DAY, 1, -1, no)", gold], ["3.16", gold], ["2.95", gold], ["DailyOpen (DAY, yes)", rose], ["4.65", rose],
                      ["VWAP (0.0, 0.0, DAY)", violet], ["4.24", violet], ["4.24", rose], ["4.24", gold],
                      ["Comparison (LINE, SPX)", teal], ["O: 1981.84", teal], ["H: 1981.96", teal], ["L: 1981.11", teal], ["C: 1981.18", teal], ["", teal],
                    ]}
                  />
                  <AxisButton />
                </div>
                <MainChart />
                <div className="mr-[34px] ml-[31px] flex h-[11px] border border-[#5a3410] bg-[#0d0638] text-[#b8b0c8]">
                  <span className="border-r border-[#5a3410] px-[1px]">Volume</span>
                  <span className="border-r border-[#5a3410] px-[2px]">17,758</span>
                </div>
                <VolumeChart />
                <ScrollBar thumb="w-[57%]" />
              </div>

              {/* Time & sales */}
              <aside className="flex w-[88px] shrink-0 border-l border-[#333] pl-[1px]">
                <div className="h-0 min-h-full flex-1 overflow-hidden">
                  <table className="h-[319px] w-full table-fixed border-collapse text-right leading-[7px]">
                    <thead>
                      <tr className="h-[10px] bg-[#1c2024] text-[#b4b4b4]">
                        <th className="p-0 text-center font-normal">✦ Time</th>
                        <th className="p-0 font-normal">Price</th>
                        <th className="p-0 pl-[1px] text-left font-normal">Size</th>
                      </tr>
                    </thead>
                    <tbody>
                      {trades.map(([time, price, size, dir], i) => (
                        <tr key={i} className={clsx("border-b border-[#242424]", dir === "u" ? "text-[#10c820]" : "text-[#e41010]")}>
                          <td className="border-r border-[#242424] p-0 text-left">19:{time}</td>
                          <td className="border-r border-[#242424] p-0 pr-[1px]">{price}</td>
                          <td className="border-r border-[#242424] p-0 pr-[1px]">{size}</td>
                        </tr>
                      ))}
                    </tbody>
                  </table>
                </div>
                <div className="flex w-[7px] flex-col items-center justify-between bg-[#161616] pt-[10px] text-[#999]">
                  <ChevronUp className="size-[6px]" strokeWidth={4} />
                  <span className="mb-auto block h-[11px] w-full bg-[#122a48]" />
                  <ChevronDown className="size-[6px]" strokeWidth={4} />
                </div>
              </aside>
            </div>
          </section>

          {/* Lower charts */}
          <div className="grid grid-cols-[minmax(0,317fr)_minmax(0,248fr)_minmax(0,262fr)] bg-[#0c0c0c]">
            <section>
              <ChartToolbar symbol="NQ" interval="D" price="3.9506" change={["+.9206", "+30.38%"]} />
              <div className="flex bg-black">
                <div className="min-w-0 flex-1">
                  <div className="flex pr-[18px] pl-[2px]">
                    <Strip
                      className="flex-1 grid-cols-[28fr_31fr_22fr_22fr_21fr_22fr_22fr_23fr_27fr_43fr_8fr]"
                      cells={[["NQ 9 m D", green], ["D: 27/08/15", pale], ["O: 4.65", pale], ["H: 4.68", pale], ["L: 3.85", pale], ["C: 4.01", pale], ["R: 0.83", pale], ["Volume", pale], ["9,941,566", pale], ["SimpleMoving...", "bg-[#2c0424] text-[#e02028]"], ["", pale]]}
                    />
                    <AxisButton />
                  </div>
                  <DailyChart />
                  <ScrollBar hand />
                </div>
                <SideTabs />
              </div>
            </section>
            <section className="border-l border-[#333]">
              <ChartToolbar symbol="NQ" interval="5m" price="3.9506" change={["+.9206", "+30.38%"]} compact patternsLabel={false} />
              <div className="flex bg-black">
                <div className="min-w-0 flex-1">
                  <div className="flex pr-[17px] pl-[1px]">
                    <Strip
                      className="flex-1 grid-cols-[30fr_48fr_22fr_21fr_22fr_22fr_22fr_9fr_8fr]"
                      cells={[["NQ 2 d 5m", green], ["D: 19:20 27/08/15", pale], ["O: 3.97", pale], ["H: 4.04", pale], ["L: 3.97", pale], ["C: 4.01", pale], ["R: 0.07", pale], ["...", pale], ["", pale]]}
                    />
                    <AxisButton />
                  </div>
                  <TwoDayChart />
                  <ScrollBar hand />
                </div>
                <SideTabs />
              </div>
            </section>
            <section className="border-l border-[#333]">
              <ChartToolbar symbol="SPY" interval="5m" price="198.62" change={["+4.", "+2."]} changeWidth="w-[14px]" compact linkColor />
              <div className="bg-black">
                <div className="flex pr-[17px] pl-[2px]">
                  <Strip
                    className="flex-1 grid-cols-[33fr_48fr_28fr_28fr_27fr_28fr_21fr_17fr]"
                    cells={[["SPY 2 d 5m", green], ["D: 16:30 26/08/15", pale], ["O: 192.08", pale], ["H: 192.49", pale], ["L: 191.73", pale], ["C: 192.23", pale], ["R: 0.76", pale], ["...", pale]]}
                  />
                  <AxisButton />
                </div>
                <SpyChart />
                <ScrollBar hand thumb="w-[74%]" />
              </div>
            </section>
          </div>
        </main>
      </div>

      <div className="pointer-events-none absolute right-[10px] bottom-0 text-[26px] leading-[22px] font-['Liberation_Sans',sans-serif] text-[#4468c0]">hamaha.net</div>
    </div>
  );
}
